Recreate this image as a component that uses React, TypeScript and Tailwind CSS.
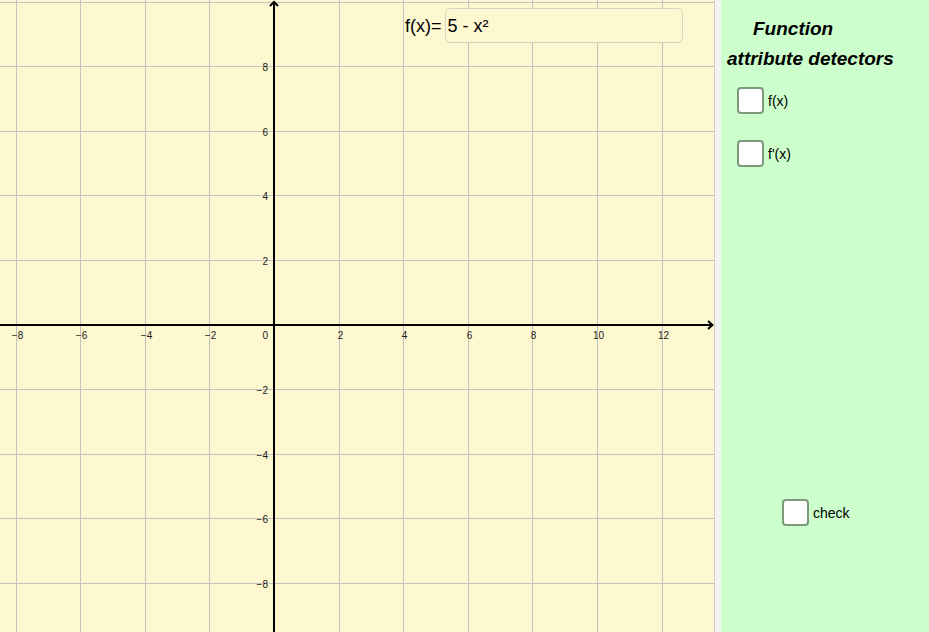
const X0 = 274;
const Y0 = 324.5;
const UNIT = 32.3;
const W = 714;
const H = 632;

const xTicks = [-8, -6, -4, -2, 2, 4, 6, 8, 10, 12];
const yTicks = [8, 6, 4, 2, -2, -4, -6, -8];

const px = (v: number) => Math.round(X0 + v * UNIT) + 0.5;
const py = (v: number) => Math.round(Y0 - v * UNIT) + 0.5;

function fmt(n: number) {
  return n < 0 ? `\u2212${Math.abs(n)}` : `${n}`;
}

function Graph() {
  const gridX = [-8, -6, -4, -2, 2, 4, 6, 8, 10, 12];
  const gridY = [10, 8, 6, 4, 2, -2, -4, -6, -8];
  return (
    <svg width={W} height={H} className="block" style={{ fontFamily: '"Liberation Sans", Arial, sans-serif' }}>
      <rect x={0} y={0} width={W} height={H} fill="#fdf8d0" />
      {gridX.map((v) => (
        <line key={`gx${v}`} x1={px(v)} y1={0} x2={px(v)} y2={H} stroke="#c2c2c2" strokeWidth={1} />
      ))}
      {gridY.map((v) => (
        <line key={`gy${v}`} x1={0} y1={py(v)} x2={W} y2={py(v)} stroke="#c2c2c2" strokeWidth={1} />
      ))}

      {/* axes */}
      <line x1={0} y1={325} x2={712} y2={325} stroke="#000" strokeWidth={2} />
      <polyline points="708,321 712.5,325 708,329" fill="none" stroke="#000" strokeWidth={2} />
      <line x1={274} y1={2} x2={274} y2={H} stroke="#000" strokeWidth={2} />
      <polyline points="270,6 274,2 278,6" fill="none" stroke="#000" strokeWidth={2} />

      {/* tick labels */}
      {xTicks.map((v) => (
        <text key={`lx${v}`} x={px(v) + 1} y={339} fontSize={10} fill="#1a1a1a" textAnchor="middle">
          {fmt(v)}
        </text>
      ))}
      <text x={268} y={339} fontSize={10} fill="#1a1a1a" textAnchor="end">
        0
      </text>
      {yTicks.map((v) => (
        <text key={`ly${v}`} x={268} y={py(v) + 4} fontSize={10} fill="#1a1a1a" textAnchor="end">
          {fmt(v)}
        </text>
      ))}
    </svg>
  );
}

function Check({ label }: { label: string }) {
  return (
    <div className="flex items-start gap-[4px]">
      <span className="block h-[27px] w-[27px] rounded-[4px] border-2 border-[#7d9a7d] bg-white" />
      <span className="pt-[6px] text-[14px] leading-[16px] text-black">{label}</span>
    </div>
  );
}

export default function App() {
  return (
    <div
      className="flex h-[632px] w-[929px] overflow-hidden"
      style={{ fontFamily: '"Liberation Sans", Arial, sans-serif' }}
    >
      <div className="relative h-full w-[714px] shrink-0">
        <Graph />
        <div className="absolute left-[405px] top-[8px] flex items-center">
          <span className="pt-[2px] text-[18px] text-black">f(x)=</span>
          <div className="ml-[3px] flex h-[35px] w-[238px] items-center rounded-[5px] border border-[#d6d3c0] bg-[#fdf8d0] pl-[2px] pt-[2px] text-[18px] text-black">
            5 - x²
          </div>
        </div>
      </div>

      <div className="h-full w-[7px] shrink-0 border-l border-[#cfcfcf] bg-[#f3f3f3]" />

      <div className="flex h-full flex-1 flex-col bg-[#ccffcc]">
        <div className="pt-[14px] text-[19px] font-bold italic leading-[30px] text-black">
          <div className="pl-[32px]">Function</div>
          <div className="pl-[6px]">attribute detectors</div>
        </div>
        <div className="mt-[13px] pl-[16px]">
          <Check label="f(x)" />
        </div>
        <div className="mt-[26px] pl-[16px]">
          <Check label="f'(x)" />
        </div>
        <div className="mt-[332px] pl-[61px]">
          <Check label="check" />
        </div>
      </div>
    </div>
  );
}
